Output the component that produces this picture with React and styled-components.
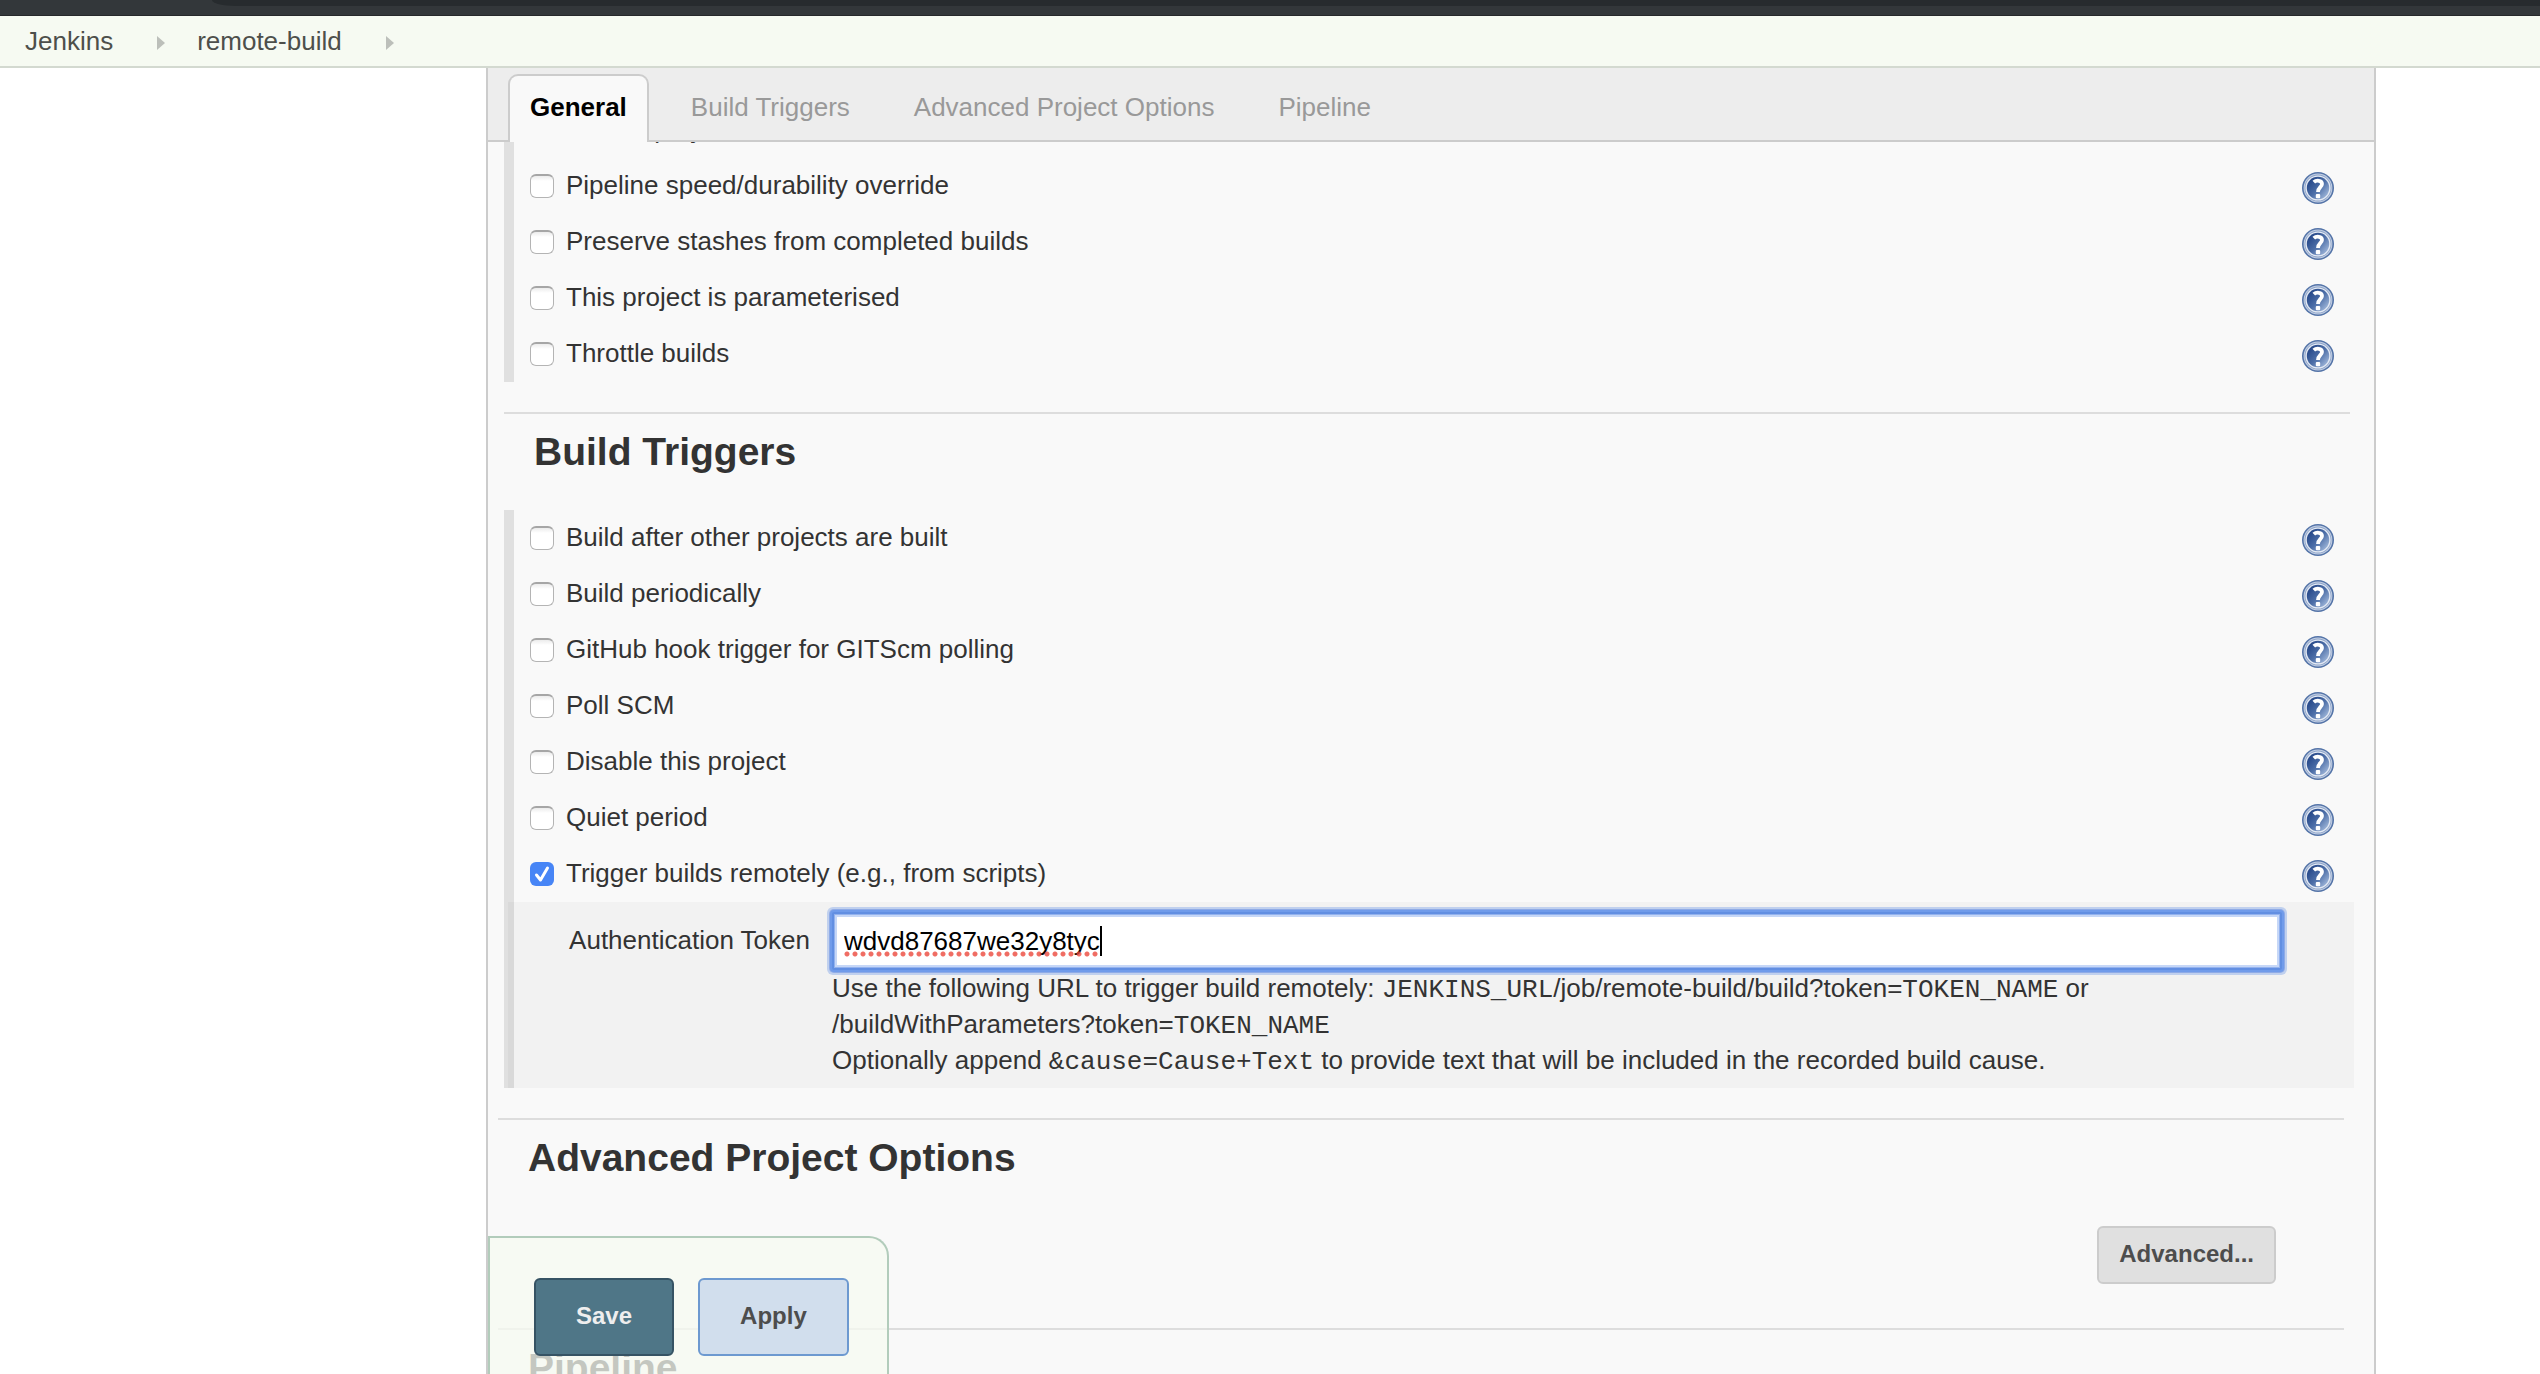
import React from "react";
import styled, { createGlobalStyle } from "styled-components";

const GlobalStyle = createGlobalStyle`
  *, *::before, *::after { box-sizing: border-box; }
  body {
    margin: 0;
    background: #fff;
    color: #333;
    font-family: Helvetica, "Liberation Sans", Arial, sans-serif;
    font-size: 26px;
    line-height: 36px;
  }
`;

const Screen = styled.div`
  display: flex;
  flex-direction: column;
  height: 100vh;
  overflow: hidden;
`;

const WindowEdge = styled.div`
  flex: none;
  height: 16px;
  padding-left: 212px;
  background: #33373a;
  border-bottom: 1px solid #26282b;
`;

const AddressField = styled.div`
  height: 6px;
  background: #272b2e;
  border-bottom-left-radius: 24px 6px;
`;

const Breadcrumbs = styled.nav`
  flex: none;
  display: flex;
  align-items: center;
  height: 52px;
  padding: 0 25px;
  background: #f6faf2;
  border-bottom: 2px solid #d3d9d0;
`;

const Crumb = styled.a`
  color: #4d4f4b;
  text-decoration: none;
`;

const CrumbArrow = styled.span`
  margin: 4px 32px 0 44px;
  border-left: 8px solid #bcbfba;
  border-top: 7px solid transparent;
  border-bottom: 7px solid transparent;
`;

const Columns = styled.div`
  flex: 1;
  min-height: 0;
  display: grid;
  grid-template-columns: 486px minmax(0, 1fr) 164px;
`;

const Panel = styled.main`
  grid-column: 2;
  position: relative;
  display: flex;
  flex-direction: column;
  min-height: 0;
  background: #f9f9f9;
  border: solid #ccc;
  border-width: 0 2px;
`;

const TabBar = styled.div`
  flex: none;
  display: flex;
  align-items: flex-end;
  gap: 20px;
  height: 74px;
  padding: 0 20px;
  background: #ededed;
  box-shadow: inset 0 -2px 0 #ccc;
`;

const Tab = styled.button`
  height: 68px;
  padding: 0 20px 4px;
  font: inherit;
  font-weight: ${(p) => (p.$active ? "bold" : "normal")};
  color: ${(p) => (p.$active ? "#000" : "#999")};
  background: ${(p) => (p.$active ? "#f9f9f9" : "transparent")};
  border: 2px solid ${(p) => (p.$active ? "#ccc" : "transparent")};
  border-bottom: 0;
  border-radius: 10px 10px 0 0;
`;

const Viewport = styled.div`
  flex: 1;
  min-height: 0;
  overflow: hidden;
`;

const Form = styled.form`
  margin-top: -40px;
`;

const OptionGroup = styled.div`
  margin: 0 20px 0 16px;
  border-left: 10px solid #e0e0e0;
`;

const Section = styled.section`
  margin: ${(p) => (p.$nested ? "30px 24px 0 16px" : "30px 30px 0 10px")};
  border-top: 2px solid #ddd;
`;

const Heading = styled.h2`
  margin: 0;
  padding: 16px 30px 0;
  font-size: 39px;
  line-height: 44px;
`;

const TriggerHeading = styled(Heading)`
  padding-bottom: 36px;
`;

const Row = styled.div`
  display: flex;
  align-items: center;
  height: 56px;
  padding: 0 20px 0 16px;
`;

const RowLabel = styled.label`
  display: flex;
  flex: 1;
  align-items: center;
  gap: 12px;
  padding-bottom: 2px;
`;

const Checkbox = styled.input`
  appearance: none;
  flex: none;
  width: 24px;
  height: 24px;
  margin: 2px 0 0;
  border: 1px solid #b4b4b4;
  border-top: 2px solid #a6a6a6;
  border-radius: 6px;
  background: #fff linear-gradient(#ececec, #fff 5px);

  &:checked {
    border: 0;
    background: #4785f6
      url("data:image/svg+xml,%3Csvg xmlns='http://www.w3.org/2000/svg' viewBox='0 0 24 24' fill='none' stroke='white' stroke-width='3' stroke-linecap='round' stroke-linejoin='round'%3E%3Cpath d='M6.5 13l4 5 7-12'/%3E%3C/svg%3E");
  }
`;

const HelpButton = styled.button`
  flex: none;
  width: 32px;
  height: 32px;
  margin-top: 4px;
  padding: 0;
  border: 0;
  background: none;

  svg { display: block; }
`;

const TokenArea = styled.div`
  display: grid;
  grid-template-columns: 324px minmax(0, 1fr);
  margin-left: -6px;
  padding: 10px 72px 10px 0;
  background: rgba(0, 0, 0, 0.028);
`;

const TokenLabel = styled.label`
  padding: 10px 22px 0 0;
  text-align: right;
`;

const TokenBox = styled.div`
  position: relative;
`;

const TokenInput = styled.input`
  display: block;
  width: 100%;
  height: 58px;
  padding: 0 10px;
  font: inherit;
  color: #000;
  background: #fff;
  border: 2px solid #628fe2;
  border-radius: 2px;
  outline: 0;
  box-shadow:
    inset 0 0 0 1px #93b2ee,
    inset 0 0 0 3px #c6d7f7,
    0 0 0 2px #709bea,
    0 0 0 3px #8fabe6,
    0 0 0 5px #c0d0ee;
`;

const SpellMark = styled.span`
  position: absolute;
  left: 12px;
  top: 39px;
  width: 255px;
  height: 6px;
  background: radial-gradient(circle at 3px 3px, rgba(236, 72, 60, 0.8) 2px, transparent 3px) 0 0 / 8px 6px;
`;

const Caret = styled.span`
  position: absolute;
  left: 268px;
  top: 14px;
  width: 2px;
  height: 30px;
  background: #000;
`;

const Description = styled.p`
  grid-column: 2;
  margin: 0;

  code {
    font-family: "Liberation Mono", "Courier New", monospace;
    font-size: 26px;
    line-height: 1;
  }
`;

const AdvancedRow = styled.div`
  display: flex;
  justify-content: flex-end;
  padding: 46px 68px 14px 0;
`;

const Button = styled.button`
  height: ${(p) => (p.$large ? 78 : 58)}px;
  padding: 0 ${(p) => (p.$large ? 40 : 20)}px 2px;
  font: inherit;
  font-size: 24px;
  font-weight: bold;
  color: ${(p) => (p.$kind === "primary" ? "#eee" : "#4d4d4d")};
  background: ${(p) => ({ primary: "#4f7687", secondary: "#d1deed" })[p.$kind] || "#e0e0e0"};
  border: 2px solid ${(p) => ({ primary: "#365364", secondary: "#6d99d0" })[p.$kind] || "#ccc"};
  border-radius: 6px;
`;

const SaveBar = styled.div`
  position: absolute;
  left: 0;
  bottom: 0;
  display: flex;
  gap: 24px;
  padding: 40px 38px 18px 44px;
  background: rgba(246, 250, 240, 0.75);
  border: 2px solid #b2ccbb;
  border-bottom: 0;
  border-top-right-radius: 20px;
`;

function HelpIcon() {
  return (
    <svg width="32" height="32" viewBox="0 0 32 32" aria-hidden="true">
      <defs>
        <linearGradient id="helpFill" x1="0.1" y1="0.2" x2="0.9" y2="0.9">
          <stop offset="0" stopColor="#27498a" />
          <stop offset="0.5" stopColor="#4d6fa8" />
          <stop offset="1" stopColor="#a0b7da" />
        </linearGradient>
      </defs>
      <circle cx="16" cy="16" r="16" fill="#5474a8" />
      <circle cx="16" cy="16" r="14.4" fill="#c3cfe3" />
      <circle cx="16" cy="16" r="13.4" fill="#8ca3c9" />
      <circle cx="16" cy="16" r="12.6" fill="#e4eaf4" />
      <circle cx="16" cy="16" r="11.2" fill="url(#helpFill)" />
      <path
        d="M11.8 10.2C14.2 8 20 8 20 12C20 15.2 16 15.4 16 20"
        fill="none"
        stroke="#fff"
        strokeWidth="3.8"
      />
      <rect x="13.8" y="22" width="4.4" height="4.2" rx="1" fill="#fff" />
    </svg>
  );
}

function Option({ label, help = true, checked = false }) {
  return (
    <Row>
      <RowLabel>
        <Checkbox type="checkbox" defaultChecked={checked} />
        {label}
      </RowLabel>
      {help && (
        <HelpButton type="button" aria-label={`Help for ${label}`}>
          <HelpIcon />
        </HelpButton>
      )}
    </Row>
  );
}

const tabs = ["General", "Build Triggers", "Advanced Project Options", "Pipeline"];

const generalOptions = [
  "Pipeline speed/durability override",
  "Preserve stashes from completed builds",
  "This project is parameterised",
  "Throttle builds",
];

const triggerOptions = [
  "Build after other projects are built",
  "Build periodically",
  "GitHub hook trigger for GITScm polling",
  "Poll SCM",
  "Disable this project",
  "Quiet period",
];

export default function App() {
  return (
    <Screen>
      <GlobalStyle />
      <WindowEdge>
        <AddressField />
      </WindowEdge>
      <Breadcrumbs>
        <Crumb href="#">Jenkins</Crumb>
        <CrumbArrow />
        <Crumb href="#">remote-build</Crumb>
        <CrumbArrow />
      </Breadcrumbs>
      <Columns>
        <Panel>
          <TabBar>
            {tabs.map((name, i) => (
              <Tab key={name} type="button" $active={i === 0}>
                {name}
              </Tab>
            ))}
          </TabBar>
          <Viewport>
            <Form id="config">
              <OptionGroup>
                <Option label="GitHub project" help={false} />
                {generalOptions.map((label) => (
                  <Option key={label} label={label} />
                ))}
              </OptionGroup>
              <Section $nested>
                <TriggerHeading>Build Triggers</TriggerHeading>
              </Section>
              <OptionGroup>
                {triggerOptions.map((label) => (
                  <Option key={label} label={label} />
                ))}
                <Option label="Trigger builds remotely (e.g., from scripts)" checked />
                <TokenArea>
                  <TokenLabel htmlFor="token">Authentication Token</TokenLabel>
                  <TokenBox>
                    <TokenInput id="token" type="text" spellCheck={false} defaultValue="wdvd87687we32y8tyc" />
                    <SpellMark />
                    <Caret />
                  </TokenBox>
                  <Description>
                    Use the following URL to trigger build remotely: <code>JENKINS_URL</code>
                    /job/remote-build/build?token=<code>TOKEN_NAME</code> or /buildWithParameters?token=
                    <code>TOKEN_NAME</code>
                    <br />
                    Optionally append <code>&amp;cause=Cause+Text</code> to provide text that will be included in
                    the recorded build cause.
                  </Description>
                </TokenArea>
              </OptionGroup>
              <Section>
                <Heading>Advanced Project Options</Heading>
                <AdvancedRow>
                  <Button type="button">Advanced...</Button>
                </AdvancedRow>
              </Section>
              <Section>
                <Heading>Pipeline</Heading>
              </Section>
            </Form>
          </Viewport>
          <SaveBar>
            <Button type="submit" form="config" $large $kind="primary">
              Save
            </Button>
            <Button type="button" $large $kind="secondary">
              Apply
            </Button>
          </SaveBar>
        </Panel>
      </Columns>
    </Screen>
  );
}
